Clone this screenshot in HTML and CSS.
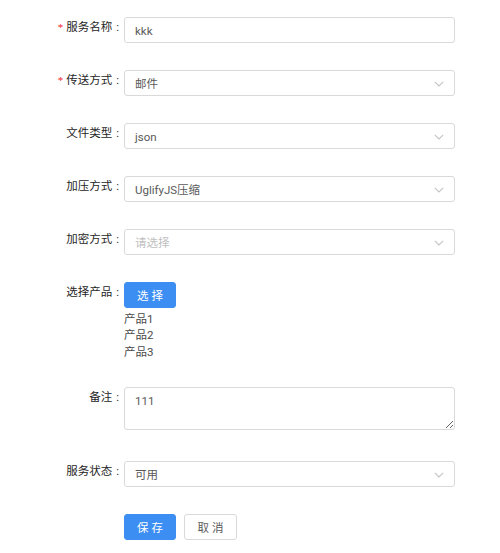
FILE: index.html
```html
<!DOCTYPE html>
<html lang="zh-CN">
<head>
<meta charset="utf-8">
<title>服务配置</title>
<link rel="stylesheet" href="styles.css">
</head>
<body>
<form class="form">
  <div class="row">
    <label class="label required">服务名称</label>
    <div class="control"><div class="input">kkk</div></div>
  </div>
  <div class="row">
    <label class="label required">传送方式</label>
    <div class="control"><div class="input select"><span>邮件</span><svg class="arrow" viewBox="0 0 10 6" width="10" height="6"><path d="M0.8 0.8 L5 5 L9.2 0.8" fill="none" stroke="#c4c4c4" stroke-width="1.1"/></svg></div></div>
  </div>
  <div class="row">
    <label class="label">文件类型</label>
    <div class="control"><div class="input select"><span>json</span><svg class="arrow" viewBox="0 0 10 6" width="10" height="6"><path d="M0.8 0.8 L5 5 L9.2 0.8" fill="none" stroke="#c4c4c4" stroke-width="1.1"/></svg></div></div>
  </div>
  <div class="row">
    <label class="label">加压方式</label>
    <div class="control"><div class="input select"><span>UglifyJS压缩</span><svg class="arrow" viewBox="0 0 10 6" width="10" height="6"><path d="M0.8 0.8 L5 5 L9.2 0.8" fill="none" stroke="#c4c4c4" stroke-width="1.1"/></svg></div></div>
  </div>
  <div class="row">
    <label class="label">加密方式</label>
    <div class="control"><div class="input select"><span class="placeholder">请选择</span><svg class="arrow" viewBox="0 0 10 6" width="10" height="6"><path d="M0.8 0.8 L5 5 L9.2 0.8" fill="none" stroke="#c4c4c4" stroke-width="1.1"/></svg></div></div>
  </div>
  <div class="row">
    <label class="label">选择产品</label>
    <div class="control">
      <button type="button" class="btn primary">选 择</button>
      <ul class="products">
        <li>产品1</li>
        <li>产品2</li>
        <li>产品3</li>
      </ul>
    </div>
  </div>
  <div class="row row-textarea">
    <label class="label">备注</label>
    <div class="control"><textarea class="textarea">111</textarea></div>
  </div>
  <div class="row">
    <label class="label">服务状态</label>
    <div class="control"><div class="input select"><span>可用</span><svg class="arrow" viewBox="0 0 10 6" width="10" height="6"><path d="M0.8 0.8 L5 5 L9.2 0.8" fill="none" stroke="#c4c4c4" stroke-width="1.1"/></svg></div></div>
  </div>
  <div class="row">
    <div></div>
    <div class="control actions">
      <button type="button" class="btn primary">保 存</button>
      <button type="button" class="btn default">取 消</button>
    </div>
  </div>
</form>
</body>
</html>
```
FILE: styles.css
```css
html, body {
  margin: 0;
  padding: 0;
  background: #ffffff;
}
body {
  font-family: Roboto, "Noto Sans CJK SC", sans-serif;
  font-size: 11.5px;
  color: #595959;
}
.form {
  display: flex;
  flex-direction: column;
  gap: 27px;
  padding-top: 17px;
}
.row {
  display: grid;
  grid-template-columns: 119px 331px;
  column-gap: 5px;
  align-items: start;
}
.row-textarea {
  margin-bottom: 4px;
}
.label {
  text-align: right;
  line-height: 21px;
  color: #262626;
  white-space: nowrap;
}
.label::after {
  content: ":";
  margin-left: 4px;
}
.required::before {
  content: "*";
  color: #f5222d;
  margin-right: 3px;
  font-family: "Liberation Serif", serif;
  font-size: 11px;
}
.control {
  min-width: 0;
}
.input {
  box-sizing: border-box;
  height: 26px;
  border: 1px solid #d9d9d9;
  border-radius: 3px;
  padding: 2px 10px 0;
  display: flex;
  align-items: center;
  justify-content: space-between;
  line-height: 16px;
  color: #595959;
}
.placeholder {
  color: #bfbfbf;
}
.arrow {
  display: block;
  margin-top: -1px;
}
.btn {
  box-sizing: border-box;
  height: 26px;
  border-radius: 3px;
  font-family: Roboto, "Noto Sans CJK SC", sans-serif;
  font-size: 11.5px;
  padding: 0;
  cursor: pointer;
}
.btn.primary {
  width: 52px;
  background: #3d8ef2;
  border: 1px solid #3d8ef2;
  color: #ffffff;
}
.btn.default {
  width: 53px;
  background: #ffffff;
  border: 1px solid #d9d9d9;
  color: #595959;
}
.products {
  list-style: none;
  margin: 3px 0 0;
  padding: 0;
  line-height: 16.4px;
  color: #4a4a4a;
}
.textarea {
  display: block;
  box-sizing: border-box;
  width: 331px;
  height: 43px;
  border: 1px solid #d9d9d9;
  border-radius: 3px;
  padding: 5px 10px;
  font-family: Roboto, "Noto Sans CJK SC", sans-serif;
  font-size: 11.5px;
  line-height: 17px;
  color: #595959;
  resize: vertical;
  margin: 0;
  outline: none;
}
.actions {
  display: flex;
  gap: 8px;
}
```
